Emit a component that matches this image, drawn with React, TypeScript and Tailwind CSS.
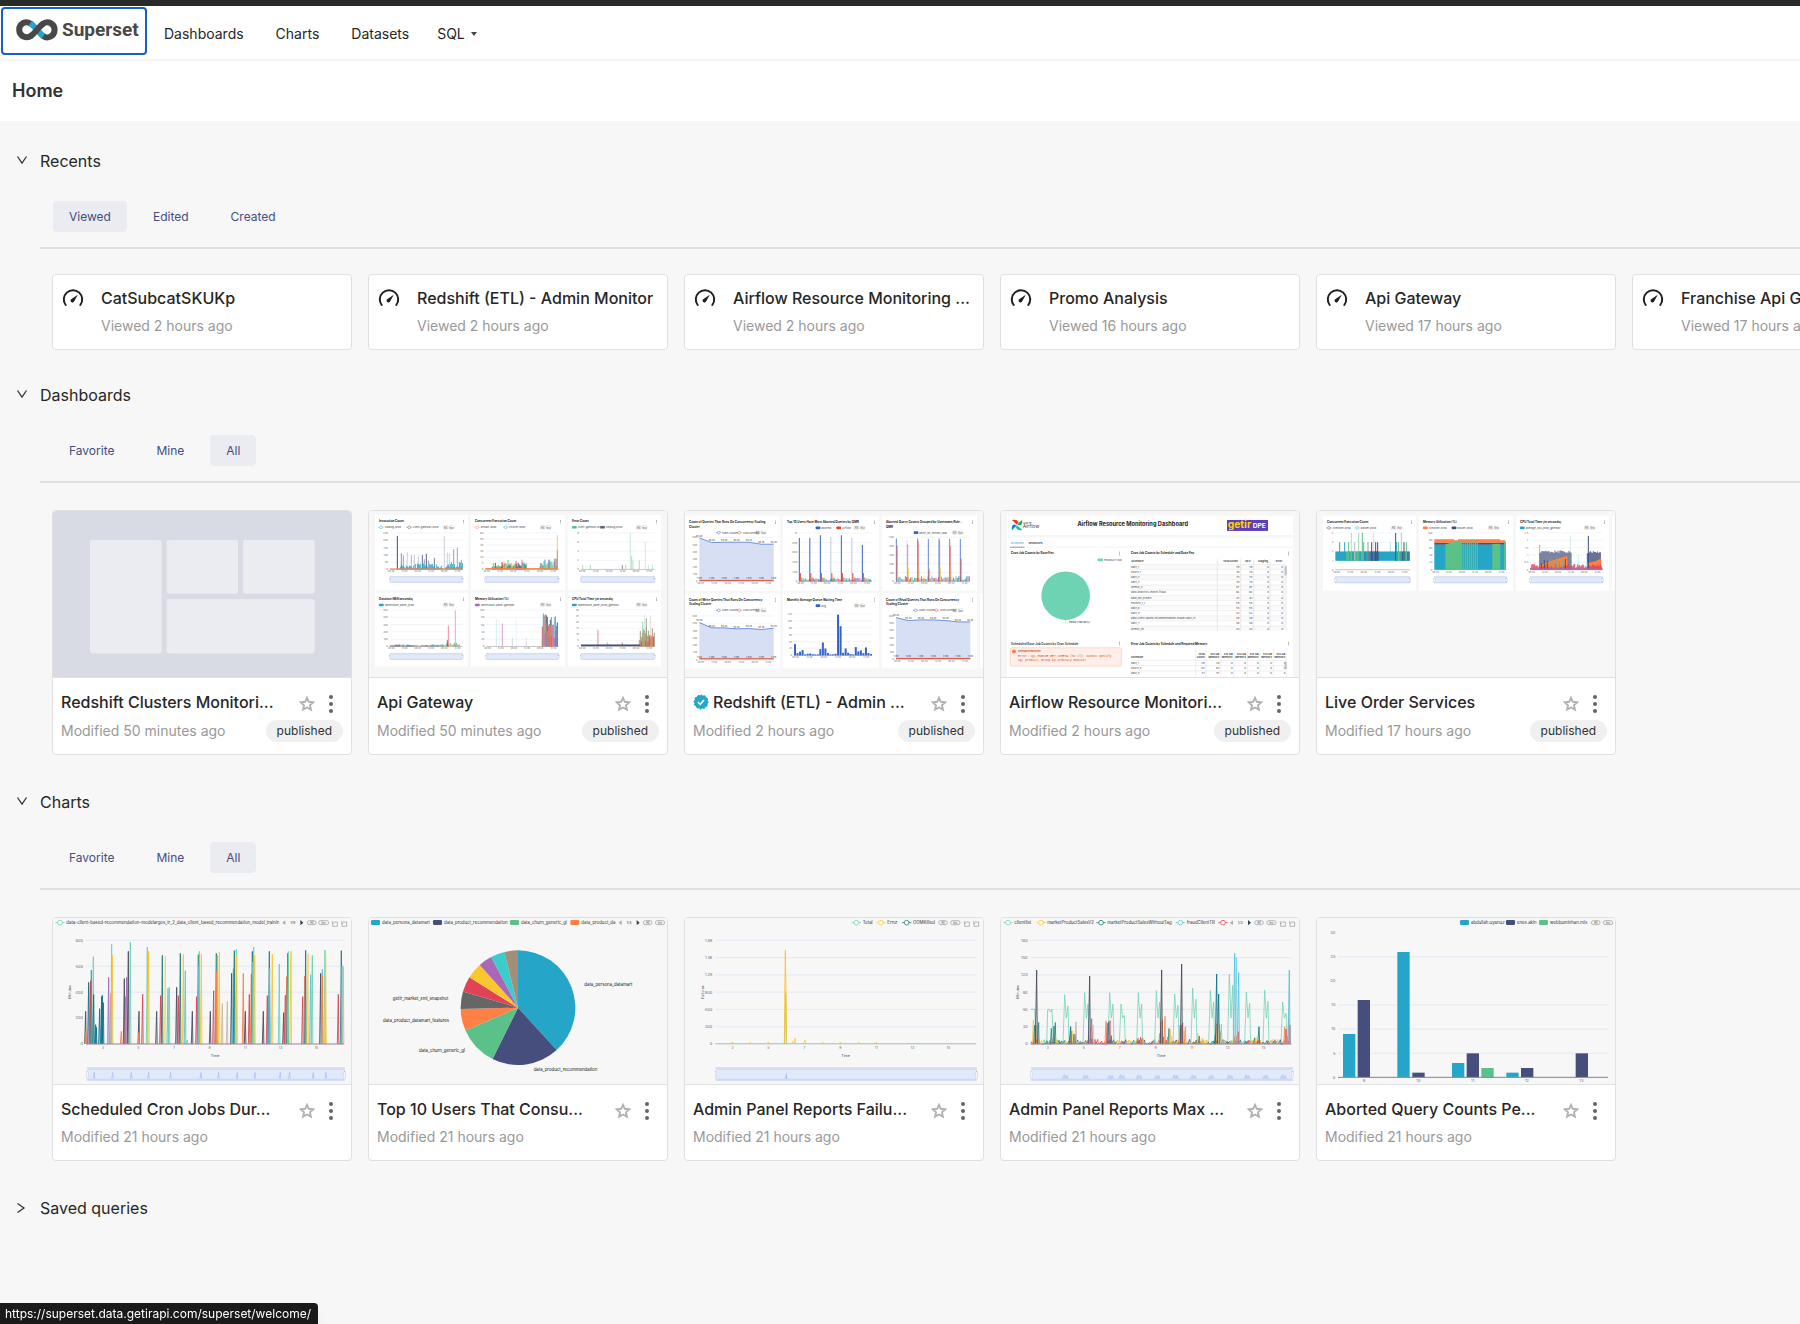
/**
 * App.tsx
 *
 * Superset welcome page: recents, dashboards, charts and saved queries.
 */

import { useState, type ReactNode } from 'react';

const TEAL = '#25a6c8';
const NAVY = '#454e7c';
const GREEN = '#5ac189';
const ORANGE = '#ff7f44';
const GRAY = '#666666';
const RED = '#e04355';
const YELLOW = '#fbc72f';
const PURPLE = '#a868b7';
const AQUA = '#3ccccb';
const BROWN = '#a38f79';
const MINT = '#6dd3b3';
const SLATE = '#484c5e';
const PINE = '#1f7d7d';
const SKY = '#5ac4da';
const BLUE = '#3462cb';

type Bar = [x: number, top: number, color: string, opacity?: number];

// Small seeded generator so the thumbnails look the same on every render
function random(seed: number) {
  let s = seed;
  return () => {
    s = (s * 16807) % 2147483647;
    return s / 2147483647;
  };
}

function noise(seed: number, from: number, to: number, step: number, base: number, min: number, max: number, colors: string[]): Bar[] {
  const next = random(seed);
  const bars: Bar[] = [];
  for (let x = from; x < to; x += step) {
    bars.push([x, base - min - next() * (max - min), colors[Math.floor(next() * colors.length)], 0.9]);
  }
  return bars;
}

/* ---------- thumbnail primitives ---------- */

interface LabelProps {
  x: number;
  y: number;
  size?: number;
  bold?: boolean;
  fill?: string;
  anchor?: 'start' | 'middle' | 'end';
  children: ReactNode;
}

function Label({ x, y, size = 9, bold = false, fill = '#444444', anchor = 'start', children }: LabelProps) {
  return (
    <text x={x} y={y} fontSize={size} fontWeight={bold ? 700 : 400} fill={fill} textAnchor={anchor}>
      {children}
    </text>
  );
}

function Bars({ data, base, width = 3 }: { data: Bar[]; base: number; width?: number }) {
  return (
    <g>
      {data.map(([x, top, color, opacity = 1], i) => (
        <rect key={i} x={x - width / 2} y={top} width={width} height={base - top} fill={color} opacity={opacity} />
      ))}
    </g>
  );
}

function Spikes({ data, base, spread = 4, stroke = 2.5 }: { data: Bar[]; base: number; spread?: number; stroke?: number }) {
  return (
    <g fill="none" strokeWidth={stroke}>
      {data.map(([x, top, color, opacity = 0.9], i) => (
        <path key={i} d={`M${x - spread} ${base}L${x} ${top}L${x + spread / 2} ${base}`} stroke={color} opacity={opacity} strokeLinejoin="bevel" />
      ))}
    </g>
  );
}

function Brush({ x, y, width, height = 20 }: { x: number; y: number; width: number; height?: number }) {
  return (
    <g>
      <rect x={x} y={y} width={width} height={height} fill="#e2e9fa" stroke="#d0d9ee" strokeWidth={1} />
      <rect x={x} y={y} width={width} height={height * 0.2} fill="#d6ddec" />
      <rect x={x} y={y + height * 0.86} width={width} height={height * 0.14} fill="#cbd8f7" />
      <rect x={x - 2} y={y + height * 0.3} width={4} height={height * 0.55} fill="#ffffff" stroke="#a9b8d6" strokeWidth={1} />
      <rect x={x + width - 2} y={y + height * 0.3} width={4} height={height * 0.55} fill="#ffffff" stroke="#a9b8d6" strokeWidth={1} />
    </g>
  );
}

function Marker({ x, y, color, size = 7 }: { x: number; y: number; color: string; size?: number }) {
  return (
    <g stroke={color} strokeWidth={size / 3}>
      <path d={`M${x - size * 2} ${y}H${x + size * 2}`} />
      <circle cx={x} cy={y} r={size} fill="#ffffff" />
    </g>
  );
}

function Pill({ x, y, w = 26, stroke = 1.5, children }: { x: number; y: number; w?: number; stroke?: number; children: ReactNode }) {
  return (
    <g>
      <rect x={x} y={y - 6} width={w} height={12} rx={6} fill="none" stroke="#777777" strokeWidth={stroke} />
      <Label x={x + w / 2} y={y + 4} anchor="middle">{children}</Label>
    </g>
  );
}

function Pager({ x, y, label }: { x: number; y: number; label: string }) {
  return (
    <g>
      <path d={`M${x + 9} ${y - 7}V${y + 7}L${x} ${y}Z`} fill="#aaaaaa" />
      <Label x={x + 31} y={y + 4} size={11} anchor="middle">{label}</Label>
      <path d={`M${x + 54} ${y - 8}V${y + 8}L${x + 63} ${y}Z`} fill="#2f4554" />
    </g>
  );
}

function Tools({ x, y }: { x: number; y: number }) {
  return (
    <path
      d={`M${x + 4} ${y - 4}h11v13h-14v-9M${x} ${y - 7}v7h5M${x + 32} ${y - 4}h11v13h-14v-9M${x + 28} ${y - 7}v7h5`}
      fill="none"
      stroke="#777777"
      strokeWidth={1.5}
    />
  );
}

interface PanelProps {
  x: number;
  y: number;
  w: number;
  h?: number;
  title: string[];
  legend: [string, string][];
  ticks: string[];
  top: number;
  base: number;
  from: number;
  to: number;
  brush?: boolean;
  markers?: boolean;
  children: ReactNode;
}

// One chart tile inside a dashboard thumbnail
function Panel({ x, y, w, h = 226, title, legend, ticks, top, base, from, to, brush = true, markers = false, children }: PanelProps) {
  const legendY = y + (title.length > 1 ? 51 : 37);
  const step = (base - top) / (ticks.length - 1);
  return (
    <g>
      <rect x={x} y={y} width={w} height={h} fill="#ffffff" />
      {title.map((line, i) => (
        <Label key={line} x={x + 12} y={y + 22 + i * 14} size={9} bold fill="#222222">{line}</Label>
      ))}
      <g fill="#555555">
        <rect x={x + w - 15} y={y + 15} width={2} height={2} />
        <rect x={x + w - 15} y={y + 19} width={2} height={2} />
        <rect x={x + w - 15} y={y + 23} width={2} height={2} />
      </g>
      {legend.map(([label, color], i) => {
        const lx = brush ? x + 12 + (i * (w - 110)) / legend.length : x + w - 190 + i * 62;
        return (
          <g key={label}>
            {markers ? <Marker x={lx + 6} y={legendY} color={color} size={4} /> : <rect x={lx} y={legendY - 4} width={14} height={8} rx={2} fill={color} />}
            <Label x={lx + 17} y={legendY + 3} size={8}>{label}</Label>
          </g>
        );
      })}
      <Pill x={x + w - 75} y={legendY} w={15} stroke={0.5}>All</Pill>
      <Pill x={x + w - 57} y={legendY} w={15} stroke={0.5}>Inv</Pill>
      {ticks.map((tick, i) => (
        <g key={i}>
          <path d={`M${from} ${base - i * step}H${to}`} stroke={i ? '#e6eaf4' : '#888888'} strokeWidth={1.5} />
          <Label x={from - 6} y={base - i * step + 3} size={8} anchor="end" fill="#777777">{tick}</Label>
        </g>
      ))}
      {children}
      {Array.from({ length: 6 }).map((_, i) => (
        <Label key={i} x={from + ((i + 0.1) * (to - from)) / 5.5} y={base + 9} size={7} anchor="middle" fill="#777777">
          {i % 2 ? '12:00' : '08:00'}
        </Label>
      ))}
      {brush && <Brush x={from} y={base + 20} width={to - from} />}
    </g>
  );
}

interface ThumbnailProps {
  viewBox: string;
  label: string;
  children: ReactNode;
}

function Thumbnail({ viewBox, label, children }: ThumbnailProps) {
  return (
    <svg viewBox={viewBox} preserveAspectRatio="none" role="img" aria-label={label} className="block h-full w-full font-['Inter',sans-serif]">
      {children}
    </svg>
  );
}

/* ---------- dashboard thumbnails ---------- */

function PlaceholderThumb() {
  return (
    <Thumbnail viewBox="39 33 894 500" label="Dashboard placeholder">
      <rect x={39} y={33} width={894} height={500} fill="#d8dbe3" />
      <g fill="#ebecf1">
        <rect x={150} y={120} width={215} height={342} rx={7} />
        <rect x={380} y={120} width={214} height={162} rx={7} />
        <rect x={609} y={120} width={215} height={162} rx={7} />
        <rect x={380} y={299} width={444} height={163} rx={7} />
      </g>
    </Thumbnail>
  );
}

const tallInvocations: Bar[] = [
  [112, 108, NAVY], [124, 160, NAVY, 0.6], [130, 166, NAVY, 0.5], [142, 156, NAVY, 0.25], [154, 166, NAVY, 0.4], [163, 165, NAVY, 0.3],
  [175, 168, NAVY, 0.3], [187, 165, NAVY, 0.8], [193, 178, NAVY, 0.5], [199, 162, NAVY, 0.9], [205, 182, NAVY, 0.5], [223, 174, '#444444', 0.7],
  [253, 108, NAVY, 0.25], [262, 158, NAVY, 0.25], [268, 162, NAVY, 0.25], [281, 148, NAVY, 0.5], [292, 144, NAVY, 0.5], [304, 180, NAVY, 0.5],
];

function ApiGatewayThumb() {
  return (
    <Thumbnail viewBox="27 33 894 500" label="Api Gateway preview">
      <rect x={27} y={33} width={894} height={500} fill="#f7f7f7" />
      <Panel x={45} y={45} w={279} title={['Invocation Count']} legend={[['catalog-prod', TEAL], ['client-gateway-prod', NAVY]]} markers ticks={['0', '50', '100', '150', '200', '250']} top={99} base={209} from={90} to={308}>
        <Bars data={tallInvocations} base={209} />
        <Bars data={noise(11, 118, 250, 3, 209, 3, 18, [TEAL])} base={209} />
        <Bars data={noise(12, 256, 308, 3, 209, 6, 22, [TEAL])} base={209} />
        <rect x={90} y={206} width={218} height={3} fill={ORANGE} />
      </Panel>
      <Panel x={333} y={45} w={282} title={['Concurrent Execution Count']} legend={[['artisan-prod', ORANGE], ['courier-prod', TEAL]]} markers ticks={['0', '5', '20', '30', '40', '50', '60']} top={99} base={209} from={376} to={596}>
        <Bars data={noise(21, 397, 500, 3, 209, 8, 20, [NAVY, NAVY, GREEN, PINE])} base={209} />
        <Bars data={noise(22, 420, 500, 6, 209, 10, 30, [RED, PURPLE, GREEN, YELLOW])} base={209} />
        <Bars data={noise(23, 540, 594, 3, 209, 10, 34, [GREEN, GREEN, NAVY, TEAL])} base={209} />
        <rect x={376} y={205} width={218} height={4} fill={ORANGE} />
        <Bars data={[[592, 105, YELLOW, 0.8], [592, 150, ORANGE, 0.9]]} base={209} />
      </Panel>
      <Panel x={624} y={45} w={279} title={['Error Count']} legend={[['client-gateway-prod', GREEN], ['catalog-prod', GRAY]]} ticks={['0', '2', '4', '6', '8']} top={99} base={209} from={663} to={884}>
        <Bars
          base={209}
          data={[[668, 195, GREEN, 0.5], [691, 195, GREEN, 0.5], [787, 195, GRAY, 0.7], [797, 195, GREEN, 0.5], [811, 100, GREEN, 0.3], [815, 168, GREEN, 0.5], [819, 182, GREEN, 0.4], [838, 182, GREEN, 0.5], [856, 126, GREEN, 0.25], [865, 195, GREEN, 0.3], [877, 195, GREEN, 0.4]]}
        />
      </Panel>
      <Panel x={45} y={279} w={279} h={222} title={['Duration (Milliseconds)']} legend={[['warehouse_panel_prod', TEAL]]} ticks={['0', '10k', '20k', '30k', '40k', '50k']} top={331} base={441} from={90} to={308}>
        <Bars data={noise(31, 90, 250, 3, 441, 2, 6, [NAVY, NAVY, TEAL, ORANGE])} base={441} />
        <Bars data={noise(32, 250, 300, 3, 441, 3, 12, [YELLOW, ORANGE, GREEN])} base={441} />
        <Bars data={[[265, 378, RED, 0.6], [262, 422, '#8b3a4a', 0.8], [286, 333, RED, 0.45]]} base={441} />
      </Panel>
      <Panel x={333} y={279} w={282} h={222} title={['Memory Utilization (%)']} legend={[['warehouse-panel-gateway', PURPLE]]} ticks={['0', '20', '40', '60', '80', '100']} top={331} base={441} from={379} to={596}>
        <Bars data={[[409, 358, TEAL, 0.2], [418, 360, TEAL, 0.1], [427, 372, PURPLE, 0.6], [457, 416, GRAY, 0.25], [469, 360, TEAL, 0.1], [499, 416, PURPLE, 0.25]]} base={441} />
        <Bars data={noise(41, 547, 594, 3, 441, 60, 100, [PURPLE, NAVY, RED, '#8fb7b0', TEAL, BROWN])} base={441} />
        <Bars data={noise(42, 547, 594, 4, 441, 20, 70, [PURPLE, ORANGE, BROWN, PURPLE])} base={441} />
      </Panel>
      <Panel x={624} y={279} w={279} h={222} title={['CPU Total Time (in seconds)']} legend={[['Warehouse_panel_prod_gateway', TEAL]]} ticks={['0', '5', '10', '15', '20', '25', '30']} top={331} base={441} from={663} to={884}>
        <Bars data={[[713, 390, GREEN, 0.6], [716, 392, RED, 0.25], [742, 428, GREEN, 0.6], [787, 428, BROWN, 0.8]]} base={441} />
        <Bars data={noise(51, 838, 884, 3, 441, 20, 70, [GREEN, BROWN, ORANGE, BROWN])} base={441} />
        <Bars data={noise(52, 840, 884, 4, 441, 8, 36, [ORANGE, RED])} base={441} />
        <Bars data={[[848, 366, GREEN, 0.6], [854, 345, GREEN, 0.3], [859, 356, BROWN, 0.8], [871, 350, BROWN, 0.3]]} base={441} />
        <rect x={663} y={435} width={176} height={5} fill={NAVY} />
      </Panel>
    </Thumbnail>
  );
}

function AreaPanel({ x, y, w, title, ys, base, top, from, to }: { x: number; y: number; w: number; title: string[]; ys: number[]; base: number; top: number; from: number; to: number }) {
  const step = (to - from) / (ys.length - 1);
  const line = ys.map((v, i) => `${from + i * step} ${v}`).join('L');
  return (
    <Panel x={x} y={y} w={w} title={title} legend={[['Main Cluster', BLUE], ['Concurrency', RED]]} markers ticks={['0', '10k', '20k', '30k', '40k', '50k', '60k']} top={top} base={base} from={from} to={to} brush={false}>
      <path d={`M${line}L${to} ${base}L${from} ${base}Z`} fill="#d6dff4" />
      <path d={`M${line}`} fill="none" stroke={BLUE} strokeWidth={2} />
      <path d={`M${from} ${base - 3}H${to}`} stroke="#d9503f" strokeWidth={3} />
      {ys.map((v, i) => (
        <g key={i}>
          <Label x={from + i * step} y={v - 4} size={7} anchor="middle" fill="#222222">53.2k</Label>
          <Label x={from + i * step} y={base - 6} size={7} anchor="middle" fill="#222222">1.31k</Label>
        </g>
      ))}
    </Panel>
  );
}

function RedshiftThumb() {
  const weeks = [0, 1, 2, 3, 4, 5, 6];
  const hourly = [434, 461, 457, 452, 465, 463, 462, 464, 465, 465, 449, 429, 447, 461, 465, 465, 463, 345, 380, 460, 447, 460, 464, 465, 443, 456, 453, 461, 444, 461, 464];
  return (
    <Thumbnail viewBox="27 33 894 500" label="Redshift (ETL) - Admin Monitor preview">
      <rect x={27} y={33} width={894} height={500} fill="#f7f7f7" />
      <AreaPanel x={27} y={47} w={285} title={['Count of Queries That Runs On Concurrency Scaling', 'Cluster']} ys={[114, 128, 127, 127, 127, 133, 133]} top={112} base={245} from={70} to={293} />
      <Panel x={321} y={47} w={288} title={['Top 10 Users Have Most Aborted Queries by QMR']} legend={[['aborted', BLUE], ['Airflow', '#e0452f']]} ticks={['0', '200', '400', '600', '800', '1k']} top={99} base={245} from={370} to={588} brush={false}>
        <Bars data={noise(61, 376, 588, 4, 245, 2, 10, [GREEN, PURPLE, TEAL, RED, BLUE])} base={245} />
        {weeks.map(i => (
          <Bars
            key={i}
            base={245}
            data={[[370 + i * 31.5, [114, 114, 106, 111, 106, 114, 135][i], BLUE, i % 2 && i !== 1 ? 0.35 : 1], [373 + i * 31.5, 220, '#e0452f'], [377 + i * 31.5, 233, ORANGE], [381 + i * 31.5, 235, GREEN]]}
          />
        ))}
      </Panel>
      <Panel x={618} y={47} w={285} title={['Aborted Query Counts Grouped by Username/Rule -', 'QMR']} legend={[['abort_on_nested_loop', BLUE]]} ticks={['0', '100', '200', '300', '400', '500']} top={112} base={245} from={660} to={882} brush={false}>
        <Bars data={noise(71, 664, 882, 4, 245, 3, 16, [GREEN, PURPLE, TEAL, RED, BROWN])} base={245} />
        {weeks.map(i => (
          <Bars
            key={i}
            base={245}
            data={[[661 + i * 32, [116, 121, 116, 117, 116, 117, 117][i], BLUE, i === 1 ? 0.2 : 0.75], [663 + i * 32, [137, 134, 124, 210, 122, 138, 176][i], '#d9503f', i % 3 ? 0.6 : 0.9], [665 + i * 32, 205, YELLOW, 0.7]]}
          />
        ))}
      </Panel>
      <AreaPanel x={27} y={281} w={285} title={['Count of Write Queries That Runs On Concurrency', 'Scaling Cluster']} ys={[369, 385, 385, 388, 387, 390, 386]} top={349} base={481} from={70} to={293} />
      <Panel x={321} y={281} w={288} title={['Monthly Average Queue Waiting Time']} legend={[['avg', BLUE]]} ticks={['0', '2k', '4k', '6k', '8k', '10k', '12k']} top={343} base={468} from={354} to={588} brush={false}>
        <Bars data={hourly.map((top, i): Bar => [357 + i * 7.6, top, BLUE])} base={468} width={6} />
      </Panel>
      <AreaPanel x={618} y={281} w={285} title={['Count of Read Queries That Runs On Concurrency', 'Scaling Cluster']} ys={[354, 363, 361, 361, 363, 367, 367]} top={349} base={480} from={660} to={883} />
      <rect x={912} y={281} width={9} height={226} fill="#ffffff" />
    </Thumbnail>
  );
}

const schedules = ['daily_1', 'hourly_1', 'daily_3', 'daily_2', 'weekly_4', 'data-analytics-month-fraud', 'data_dw_project', 'monthly_1_1', 'daily_9', 'daily_11', 'data-client-based-recommendation-model-daily_13', 'daily_7', 'weekly_ml'];

function AirflowThumb() {
  return (
    <Thumbnail viewBox="27 33 894 500" label="Airflow Resource Monitoring preview">
      <rect x={27} y={33} width={894} height={500} fill="#f7f7f7" />
      <rect x={45} y={47} width={858} height={58} fill="#ffffff" />
      <rect x={45} y={113} width={858} height={420} fill="#ffffff" />
      <g>
        <path d="M74 74L60 60Q74 58 80 66Z" fill="#e43921" />
        <path d="M75 74L90 60Q93 72 84 76Z" fill="#00ad46" />
        <path d="M75 76L91 90Q78 94 71 83Z" fill="#11c3a0" />
        <path d="M74 76L60 91Q57 78 66 74Z" fill="#017cee" />
        <path d="M74 74L88 62L80 72Z" fill="#ff7557" />
      </g>
      <Label x={93} y={71} size={7}>Apache</Label>
      <Label x={92} y={84} size={15}>Airflow</Label>
      <Label x={422} y={79} size={17} bold anchor="middle" fill="#222222">Airflow Resource Monitoring Dashboard</Label>
      <rect x={705} y={60} width={123} height={33} fill="#5d3ebc" />
      <Label x={707} y={85} size={31} bold fill="#ffd300">getir</Label>
      <Label x={782} y={84} size={20} bold fill="#ffffff">DPE</Label>
      <Label x={56} y={131} size={8} fill={TEAL}>Schedules</Label>
      <Label x={110} y={131} size={8} bold>Resources</Label>
      <path d="M54 142H98" stroke="#8b8ec0" strokeWidth={3} />
      <path d="M98 142H903" stroke="#eeeeee" strokeWidth={2} />

      <Label x={57} y={164} size={9} bold fill="#222222">Cron Job Counts by Base Env</Label>
      <rect x={317} y={176} width={16} height={8} rx={2} fill={MINT} />
      <Label x={336} y={183} size={8}>PRODUCTION</Label>
      <circle cx={221} cy={288} r={73} fill={MINT} />
      <path d="M221 361V369H226" fill="none" stroke={MINT} strokeWidth={1.5} />
      <Label x={231} y={371} size={8} fill="#222222">PROD (100.00%)</Label>

      <Label x={417} y={164} size={9} bold fill="#222222">Cron Job Counts by Schedule and Base Env</Label>
      {['Total Count', 'DEV', 'Staging', 'Error'].map((name, i) => (
        <Label key={name} x={[738, 776, 828, 871][i]} y={187} size={8} bold anchor="end">{name}</Label>
      ))}
      <Label x={418} y={187} size={8} bold>Schedule</Label>
      {schedules.map((name, i) => (
        <g key={name}>
          {i % 2 === 0 && <rect x={414} y={194 + i * 15.5} width={462} height={15} fill="#fafafa" />}
          <path d={`M414 ${194 + i * 15.5}H876`} stroke="#e4e4e4" strokeWidth={1.5} />
          <Label x={417} y={204 + i * 15.5} size={8}>{name}</Label>
          {[742, 781, 831, 873].map((cx, c) => (
            <Label key={cx} x={cx} y={204 + i * 15.5} size={8} anchor="end">{c < 2 ? 79 - i * 3 : 0}</Label>
          ))}
        </g>
      ))}
      <path d="M676 178V393M746 178V393M785 178V393M834 178V393M876 194V393" stroke="#e0e0e0" strokeWidth={2} />
      <rect x={877} y={194} width={8} height={199} fill="#f3f3f3" />
      <rect x={878} y={199} width={6} height={28} rx={3} fill="#bdbdbd" />

      <Label x={57} y={436} size={9} bold fill="#444444">Scheduled Base Job Counts by Cron Schedule</Label>
      <rect x={55} y={445} width={333} height={55} rx={4} fill="#ffefe8" stroke="#ffc7ae" strokeWidth={2} />
      <circle cx={66} cy={456} r={6} fill={ORANGE} />
      <Label x={78} y={459} size={8} bold fill="#c4532b">Unexpected Error</Label>
      <g className="font-['Liberation_Mono',monospace]">
        <Label x={78} y={473} size={9} fill="#c4532b">Error: SQL_ENGINE_GET_SCHEMA (no cl): Cannot specify</Label>
        <Label x={78} y={486} size={9} fill="#c4532b">SQL product: Group by ordinary monitor</Label>
      </g>

      <Label x={417} y={436} size={9} bold fill="#222222">Error Job Counts by Schedule and Required Memory</Label>
      <Label x={417} y={476} size={8} bold>Schedule</Label>
      {[638, 682, 722, 762, 800, 840, 880].map((cx, i) => (
        <g key={cx}>
          <Label x={cx} y={466} size={8} bold anchor="end">{i ? '512 GB' : 'Total'}</Label>
          <Label x={cx} y={476} size={8} bold anchor="end">{i ? 'Memory' : 'Count'}</Label>
          <path d={`M${cx + 4} 446V533`} stroke="#e0e0e0" strokeWidth={1.5} />
          {['29', '83', '57'].map((v, r) => (
            <Label key={v} x={cx} y={493 + r * 16} size={8} anchor="end">{i < 2 ? v : '0'}</Label>
          ))}
        </g>
      ))}
      {['daily_1', 'hourly_5', 'daily_5'].map((name, i) => (
        <g key={name}>
          <path d={`M414 ${483 + i * 16}H884`} stroke="#e0e0e0" strokeWidth={1.5} />
          <Label x={417} y={493 + i * 16} size={8}>{name}</Label>
        </g>
      ))}
      <path d="M611 446V533" stroke="#e0e0e0" strokeWidth={1.5} />
      <rect x={878} y={486} width={6} height={24} rx={3} fill="#bdbdbd" />
      <g fill="#444444">
        <path d="M382 156h2v2h-2zM382 160h2v2h-2zM382 164h2v2h-2zM889 156h2v2h-2zM889 160h2v2h-2zM889 164h2v2h-2z" />
        <path d="M382 427h2v2h-2zM382 431h2v2h-2zM382 435h2v2h-2zM889 427h2v2h-2zM889 431h2v2h-2zM889 435h2v2h-2z" />
      </g>
    </Thumbnail>
  );
}

function LiveOrderThumb() {
  return (
    <Thumbnail viewBox="27 33 894 500" label="Live Order Services preview">
      <rect x={27} y={33} width={894} height={500} fill="#f7f7f7" />
      <Panel x={45} y={47} w={279} title={['Concurrent Execution Count']} legend={[['liveorder-prod', NAVY], ['basket-prod', TEAL]]} markers ticks={['0', '1', '2', '3', '4']} top={99} base={210} from={82} to={306}>
        <rect x={82} y={155} width={224} height={28} fill={TEAL} />
        <Bars data={noise(81, 116, 166, 3, 183, 28, 28, [GREEN, GREEN, GREEN, TEAL])} base={183} />
        <Bars data={noise(82, 168, 212, 3, 183, 28, 28, [NAVY, NAVY, TEAL])} base={183} />
        <Bars data={noise(83, 268, 304, 4, 183, 28, 28, [GREEN, NAVY, TEAL])} base={183} />
        <Bars
          base={183}
          data={[[95, 127, TEAL], [110, 127, TEAL], [122, 127, GREEN], [130, 99, GREEN, 0.5], [140, 127, '#bbbbbb'], [152, 99, GREEN, 0.6], [163, 99, GREEN], [167, 127, GREEN], [180, 127, '#999999'], [191, 127, NAVY], [197, 99, GREEN, 0.35], [203, 127, NAVY], [209, 127, NAVY], [247, 127, TEAL, 0.3], [263, 99, NAVY], [266, 127, TEAL], [272, 127, GREEN], [280, 99, GREEN, 0.6], [288, 127, NAVY], [295, 127, GREEN]]}
        />
      </Panel>
      <Panel x={333} y={47} w={282} title={['Memory Utilization (%)']} legend={[['liveorder-prod', ORANGE], ['basket-prod', NAVY]]} ticks={['0', '20', '40', '60', '80', '100']} top={99} base={210} from={379} to={596}>
        <rect x={379} y={133} width={214} height={77} fill={TEAL} />
        <rect x={379} y={128} width={214} height={6} fill={NAVY} />
        <path d="M379 118H438V121H450V118H576V121H592V129H379Z" fill={ORANGE} />
        <path d="M412 133L450 123L462 122V210H412Z" fill={GREEN} />
        <Bars data={noise(91, 466, 510, 6, 210, 80, 92, [GREEN])} base={210} width={4} />
        <rect x={553} y={132} width={24} height={78} fill={GREEN} />
        <rect x={588} y={126} width={6} height={84} fill={GREEN} />
      </Panel>
      <Panel x={624} y={47} w={279} title={['CPU Total Time (in seconds)']} legend={[['average_cpu_prod_gateway', TEAL]]} ticks={['0', '0.5', '1', '1.5', '2', '2.5']} top={99} base={210} from={667} to={884}>
        <Bars data={noise(101, 696, 790, 3, 210, 50, 58, [NAVY])} base={210} />
        <Bars data={noise(102, 838, 880, 3, 210, 50, 58, [NAVY])} base={210} />
        <path d="M696 196L720 186L778 168L779 210H696Z" fill={ORANGE} />
        <path d="M838 190L862 184L880 176V210H838Z" fill={ORANGE} />
        <Bars data={noise(103, 668, 884, 3, 210, 6, 18, [RED])} base={210} />
        <Bars data={noise(104, 700, 778, 9, 210, 20, 36, [GREEN, BROWN, NAVY])} base={210} />
        <Bars data={[[695, 135, GRAY, 0.5], [787, 108, GREEN, 0.25], [841, 108, NAVY], [811, 165, TEAL, 0.2], [784, 196, PURPLE]]} base={210} />
        <rect x={667} y={206} width={217} height={4} fill={PURPLE} />
      </Panel>
      <rect x={912} y={47} width={9} height={226} fill="#ffffff" />
    </Thumbnail>
  );
}

/* ---------- chart thumbnails ---------- */

interface AxesProps {
  from: number;
  to: number;
  ticks: string[];
  days: [number, string][];
  unit: string;
  unitX: number;
}

function Axes({ from, to, ticks, days, unit, unitX }: AxesProps) {
  const step = 311 / (ticks.length - 1);
  return (
    <g>
      {ticks.map((tick, i) => (
        <g key={tick}>
          <path d={`M${from} ${432 - i * step}H${to}`} stroke="#e0e6f1" strokeWidth={2.5} />
          <Label x={from - 9} y={436 - i * step} size={12} anchor="end" fill="#6e7079">{tick}</Label>
        </g>
      ))}
      {days.map(([x, day]) => (
        <Label key={x} x={x} y={447} size={11} anchor="middle" fill="#6e7079">{day}</Label>
      ))}
      <text transform={`translate(${unitX} 276) rotate(-90)`} textAnchor="middle" fontSize={11} fill="#555555">{unit}</text>
      <Label x={(from + to) / 2} y={471} size={11} anchor="middle">Time</Label>
    </g>
  );
}

const cronSpikes: Bar[] = [
  [137, 334, SLATE], [138, 392, ORANGE], [146, 247, '#12728a'], [151, 258, PURPLE], [154, 210, TEAL], [152, 242, RED], [160, 170, MINT], [161, 284, '#12728a'],
  [167, 374, '#12728a'], [169, 382, '#12728a'], [179, 326, '#12728a'], [185, 290, '#12728a'], [187, 286, '#12728a'], [190, 308, '#12728a'], [206, 232, PURPLE], [215, 133, MINT], [217, 166, YELLOW], [212, 280, RED, 0.3],
  [244, 394, ORANGE], [253, 236, SLATE], [257, 290, RED, 0.5], [260, 232, PURPLE], [265, 154, SLATE], [271, 127, MINT], [297, 334, SLATE], [297, 398, ORANGE], [308, 283, RED], [322, 141, MINT], [326, 154, YELLOW],
  [350, 334, SLATE], [362, 287, RED], [367, 166, PINE], [376, 168, YELLOW, 0.6], [384, 265, SKY], [388, 262, MINT], [410, 262, SLATE], [415, 287, RED], [421, 160, PINE], [430, 163, YELLOW], [436, 212, SKY], [442, 420, MINT],
  [457, 334, SLATE], [470, 290, RED], [475, 164, PINE], [478, 154, MINT], [484, 162, YELLOW], [476, 200, SKY], [511, 334, SLATE], [521, 272, RED], [529, 160, PINE], [532, 166, MINT], [538, 156, YELLOW], [529, 215, ORANGE],
  [547, 310, '#c9b8a8'], [562, 304, '#c9b8a8'], [575, 220, SLATE], [580, 206, SKY], [583, 152, PINE], [589, 148, MINT], [590, 166, YELLOW], [610, 220, ORANGE], [616, 334, SLATE], [628, 283, RED], [634, 222, ORANGE], [637, 154, PINE], [638, 186, SKY], [641, 142, MINT], [644, 166, YELLOW],
  [670, 334, SLATE], [682, 287, RED], [688, 154, PINE], [689, 206, SKY], [697, 162, YELLOW], [718, 192, MINT], [731, 338, SLATE], [736, 286, RED], [740, 230, ORANGE], [743, 160, PINE], [745, 154, MINT], [753, 154, YELLOW],
  [788, 290, RED], [794, 228, ORANGE], [797, 151, PINE], [804, 160, YELLOW, 0.7], [812, 224, SKY], [817, 166, MINT], [842, 220, SLATE], [847, 208, SKY], [847, 226, ORANGE], [855, 150, MINT], [857, 168, YELLOW], [895, 283, RED], [904, 152, PINE], [906, 196, SKY], [910, 200, '#c9b8a8'],
];

function CronThumb() {
  return (
    <Thumbnail viewBox="39 54 894 498" label="Scheduled Cron Jobs Duration preview">
      <Marker x={60} y={68} color={MINT} />
      <Label x={79} y={72} size={13} fill="#333333">data-client-based-recommendation-model</Label>
      <Label x={341} y={72} size={13} fill="#333333">argos_tr_2_data_client_based_recommendation_model_trainin</Label>
      <rect x={718} y={58} width={215} height={20} fill="#f7f7f7" />
      <Pager x={727} y={68} label="1/9" />
      <Pill x={802} y={68}>All</Pill>
      <Pill x={836} y={68} w={30}>Inv</Pill>
      <Tools x={877} y={70} />
      <Axes from={138} to={912} ticks={['0', '200', '400', '600', '800']} days={[[189, '3'], [295, '5'], [402, '7'], [509, '9'], [616, '11'], [722, '13'], [829, '15']]} unit="Minutes" unitX={93} />
      <Spikes data={cronSpikes} base={432} spread={3} stroke={3} />
      <path d="M138 432H912" stroke="#a08a94" strokeWidth={3} />
      <Brush x={142} y={502} width={772} height={40} />
      <Spikes base={536} data={[163, 218, 274, 326, 392, 483, 536, 592, 645, 721, 749, 820, 858].map((x): Bar => [x, 517, '#a9c0f5'])} spread={3} />
    </Thumbnail>
  );
}

const slices: [number, string][] = [[137.6, TEAL], [206.4, NAVY], [246.4, GREEN], [268.7, ORANGE], [286.3, GRAY], [302.1, RED], [318.1, YELLOW], [332, PURPLE], [346.3, AQUA], [360, BROWN]];

function PieThumb() {
  const point = (deg: number) => {
    const a = (deg * Math.PI) / 180;
    return `${474 + 172 * Math.sin(a)} ${323 - 172 * Math.cos(a)}`;
  };
  return (
    <Thumbnail viewBox="27 54 894 498" label="Top 10 Users That Consume preview">
      {([[33, TEAL, 'data_persona_datamart'], [219, NAVY, 'data_product_recommendation'], [450, GREEN, 'data_churn_generic_gl'], [631, ORANGE, 'data_product_da']] as [number, string, string][]).map(([x, color, name]) => (
        <g key={name}>
          <rect x={x} y={60} width={27} height={15} rx={4} fill={color} />
          <Label x={x + 33} y={72} size={13} fill="#333333">{name}</Label>
        </g>
      ))}
      <Pager x={776} y={68} label="1/4" />
      <Pill x={850} y={68}>All</Pill>
      <Pill x={886} y={68} w={28}>Inv</Pill>
      {slices.map(([end, color], i) => (
        <path key={color} d={`M474 323L${point(i ? slices[i - 1][0] : 0)}A172 172 0 0 1 ${point(end)}Z`} fill={color} />
      ))}
      <Label x={673} y={257} size={13} fill="#111111">data_persona_datamart</Label>
      <Label x={521} y={514} size={13} fill="#111111">data_product_recommendation</Label>
      <Label x={315} y={455} size={13} anchor="end" fill="#111111">data_churn_generic_gl</Label>
      <Label x={267} y={367} size={13} anchor="end" fill="#111111">data_product_datamart_features</Label>
      <Label x={265} y={301} size={13} anchor="end" fill="#111111">getir_market_xml_snapshot</Label>
    </Thumbnail>
  );
}

const lineDays = (start: number, step: number): [number, string][] =>
  ['3', '5', '7', '9', '11', '13', '15'].map((day, i) => [start + i * step, day]);

function FailureThumb() {
  return (
    <Thumbnail viewBox="27 54 894 498" label="Admin Panel Reports Failure preview">
      {([[541, MINT, 'Total'], [615, YELLOW, 'Error'], [692, PINE, 'OOMKilled']] as [number, string, string][]).map(([x, color, name]) => (
        <g key={name}>
          <Marker x={x} y={68} color={color} />
          <Label x={x + 19} y={72} size={13} fill="#333333">{name}</Label>
        </g>
      ))}
      <Pill x={788} y={68}>All</Pill>
      <Pill x={824} y={68} w={28}>Inv</Pill>
      <Tools x={865} y={70} />
      <Axes from={118} to={900} ticks={['0', '300', '600', '900', '1.2k', '1.5k', '1.8k']} days={lineDays(169, 108)} unit="Failures" unitX={84} />
      <path d="M118 431H900" stroke="#b9d3a6" strokeWidth={4} />
      <path d="M325 431L328 150L332 431" fill="none" stroke={YELLOW} strokeWidth={3} strokeLinejoin="bevel" />
      <path d="M326 431L329 280L331 431" fill="none" stroke="#d3c568" strokeWidth={3} strokeLinejoin="bevel" />
      <Spikes base={431} data={[[357, 414, YELLOW], [350, 425, YELLOW], [387, 420, YELLOW], [169, 426, YELLOW], [223, 426, YELLOW], [277, 426, YELLOW], [440, 426, YELLOW], [494, 426, YELLOW], [548, 426, YELLOW], [601, 426, YELLOW]]} />
      <Brush x={120} y={502} width={782} height={40} />
      <path d="M327 536L331 516L334 536" fill="#a9c0f5" />
    </Thumbnail>
  );
}

// Mint series of the "Max" chart: x and height of each daily peak
const dailyPeaks = [[219, 284], [279, 278], [354, 278], [388, 312], [440, 278], [494, 272], [549, 282], [603, 264], [656, 272], [713, 222], [764, 276], [819, 270], [873, 306]];

const clusterTops = [[126, 90], [180, 80], [236, 55], [290, 66], [344, 84], [440, 24], [505, 84], [525, 50], [566, 66], [620, 50], [672, 66], [725, 40], [790, 20], [880, 80]];

function MaxThumb() {
  const low = noise(131, 125, 890, 4, 432, 0, 14, [MINT, RED, YELLOW, SLATE, PINE]);
  const clusters = clusterTops.flatMap(([x, max], i) =>
    noise(140 + i, x - 6, x + 17, 4, 432, 8, max, [ORANGE, YELLOW, RED, PINE, ORANGE]),
  );
  return (
    <Thumbnail viewBox="27 54 894 498" label="Admin Panel Reports Max Duration preview">
      {([[48, MINT, 'clientlist'], [147, YELLOW, 'marketProductSalesV2'], [327, PINE, 'marketProductSalesWithoutTag'], [565, SKY, 'fraudClientTR'], [693, RED, '']] as [number, string, string][]).map(([x, color, name]) => (
        <g key={x}>
          <Marker x={x} y={68} color={color} />
          <Label x={x + 19} y={72} size={13} fill="#333333">{name}</Label>
        </g>
      ))}
      <Pager x={714} y={68} label="1/3" />
      <Pill x={788} y={68}>All</Pill>
      <Pill x={824} y={68} w={28}>Inv</Pill>
      <Tools x={865} y={70} />
      <Axes from={116} to={898} ticks={['0', '30', '60', '90', '120', '150', '180']} days={lineDays(167, 108)} unit="Minutes" unitX={80} />
      <path d="M116 328H128L133 432M164 432L167 330L172 328L176 336L180 328L184 432" fill="none" stroke={MINT} strokeWidth={2.5} />
      {dailyPeaks.map(([x, y]) => (
        <path
          key={x}
          d={`M${x - 6} 432L${x - 1} ${y}L${x + 4} 354L${x + 9} ${y + 34}L${x + 12} 432`}
          fill="none"
          stroke={MINT}
          strokeWidth={2.5}
          opacity={0.9}
        />
      ))}
      <Spikes data={low} base={432} spread={5} />
      <Spikes data={clusters} base={432} spread={3} />
      <Spikes
        base={432}
        spread={4}
        stroke={3}
        data={[[134, 210, SLATE], [293, 228, SLATE], [509, 210, SLATE], [569, 192, SLATE], [674, 222, '#12728a'], [680, 282, '#12728a'], [236, 380, '#12728a'], [801, 380, PINE], [728, 160, SKY], [733, 172, SKY, 0.6], [740, 218, SKY], [892, 210, SKY], [688, 372, SKY, 0.6], [299, 356, PURPLE], [252, 366, '#c9b8a8']]}
      />
      <path d="M116 432H898" stroke="#a08a94" strokeWidth={3} />
      <Brush x={118} y={502} width={784} height={40} />
      {dailyPeaks.map(([x], i) => (
        <path key={x} d={`M${x - 10} 536L${x - 2} ${521 + (i % 3) * 2}L${x + 2} 528L${x + 7} 524L${x + 12} 536Z`} fill="#c0d0f7" />
      ))}
    </Thumbnail>
  );
}

function AbortedThumb() {
  const bars: [number, number, string][] = [[105, 402, TEAL], [149, 300, NAVY], [268, 156, TEAL], [313, 518, NAVY], [432, 489, TEAL], [476, 460, NAVY], [520, 504, GREEN], [595, 518, TEAL], [639, 504, NAVY], [803, 460, NAVY]];
  return (
    <Thumbnail viewBox="27 54 894 498" label="Aborted Query Counts preview">
      {([[456, TEAL, 'abdullah.uyanuz'], [594, NAVY, 'enes.akin'], [693, GREEN, 'webbuminhan.mis']] as [number, string, string][]).map(([x, color, name]) => (
        <g key={name}>
          <rect x={x} y={60} width={27} height={15} rx={4} fill={color} />
          <Label x={x + 33} y={72} size={13} fill="#333333">{name}</Label>
        </g>
      ))}
      <Pill x={850} y={68}>All</Pill>
      <Pill x={886} y={68} w={28}>Inv</Pill>
      {['0', '5', '10', '15', '20', '25', '30'].map((tick, i) => (
        <g key={tick}>
          {i < 6 && i !== 4 && <path d={`M90 ${532 - i * 72.3}H900`} stroke="#e0e6f1" strokeWidth={2.5} />}
          <Label x={82} y={536 - i * 72.3} size={12} anchor="end" fill="#6e7079">{tick}</Label>
        </g>
      ))}
      {bars.map(([x, top, color]) => (
        <rect key={x} x={x} y={top} width={37} height={532 - top} fill={color} />
      ))}
      <path d="M90 532H900" stroke="#888888" strokeWidth={3} />
      {['9', '10', '11', '12', '13'].map((day, i) => (
        <Label key={day} x={168 + i * 163} y={547} size={12} anchor="middle" fill="#6e7079">{day}</Label>
      ))}
    </Thumbnail>
  );
}

/* ---------- icons ---------- */

function Logo() {
  return (
    <svg viewBox="0 0 42 22" className="h-[22px] w-[42px]" fill="none" strokeWidth={6} aria-hidden="true">
      <path d="M15.5 5.2C10 .8 3.200 4.600 3.200 10.800C3.200 17.200 10.500 20.500 15.500 16.500" stroke="#484848" />
      <path d="M26.500 5.200C31.500 .8 38.600 4.600 38.600 10.800C38.600 17.200 31.500 20.800 26.500 16.500" stroke="#484848" />
      <path d="M14.300 4.200C17 6 18.500 8 21 10.800C23.500 13.600 25 15.600 27.300 17.200" stroke="#20a7c9" />
      <path d="M14.300 17.300C17 15.700 18.500 13.600 21 10.800C23.500 8 25 6 27.500 4.400" stroke="#484848" />
    </svg>
  );
}

function GaugeIcon() {
  return (
    <svg viewBox="0 0 22 20" className="mt-0.5 h-5 w-[22px] shrink-0" fill="none" aria-hidden="true">
      <path d="M3.700 17A9.200 9.200 0 1 1 18.300 17" stroke="#1f1f1f" strokeWidth={2} strokeLinecap="round" />
      <path d="M15.800 6.800L12.200 13.300A1.900 1.900 0 1 1 9.500 10.900Z" fill="#1f1f1f" />
    </svg>
  );
}

function StarIcon() {
  return (
    <svg viewBox="0 0 16 16" className="size-4" fill="none" stroke="#b2b2b2" strokeWidth={1.9} aria-hidden="true">
      <path d="M8 1.800L9.800 5.800L14.300 6.300L11 9.300L11.900 13.700L8 11.500L4.100 13.700L5 9.300L1.700 6.300L6.200 5.800Z" />
    </svg>
  );
}

function DotsIcon() {
  return (
    <svg viewBox="0 0 6 18" className="h-[18px] w-[6px]" fill="#666666" aria-hidden="true">
      <circle cx={3} cy={2} r={2} />
      <circle cx={3} cy={9} r={2} />
      <circle cx={3} cy={16} r={2} />
    </svg>
  );
}

function CertifiedIcon() {
  return (
    <svg viewBox="0 0 16 16" className="size-4 shrink-0" aria-hidden="true">
      <path
        d="M8 .8L9.700 2.100L11.800 1.700L12.600 3.600L14.600 4.500L14.200 6.500L15.300 8.200L14 9.800L14.200 11.900L12.300 12.600L11.400 14.500L9.400 14L7.700 15.200L6.200 13.800L4.100 14L3.400 12L1.500 11.100L2 9.100L.9 7.400L2.300 5.900L2.100 3.800L4.100 3.200L5 1.400L7 2Z"
        fill="#20a7c9"
        stroke="#20a7c9"
        strokeLinejoin="round"
      />
      <path d="M5 8.200L7.200 10.300L11 6" stroke="#ffffff" strokeWidth={1.7} fill="none" />
    </svg>
  );
}

/* ---------- page pieces ---------- */

interface SectionProps {
  title: string;
  tabs?: string[];
  initialTab?: string;
  defaultOpen?: boolean;
  children?: ReactNode;
}

function Section({ title, tabs = [], initialTab, defaultOpen = true, children }: SectionProps) {
  const [open, setOpen] = useState(defaultOpen);
  const [active, setActive] = useState(initialTab);

  return (
    <section>
      <h2>
        <button type="button" aria-expanded={open} onClick={() => setOpen(!open)} className="flex h-6 items-center pl-4 text-base">
          <svg viewBox="0 0 12 12" className={`mr-3 size-3 ${open ? '' : '-rotate-90'}`} fill="none" stroke="#333333" strokeWidth={1.3} aria-hidden="true">
            <path d="M1.500 1.500L6 8L10.500 1.500" />
          </svg>
          {title}
        </button>
      </h2>
      {open && (
        <div className="pl-10">
          <div role="tablist" className="mt-7 flex gap-2.5 border-b-2 border-[#e0e0e0] pb-[15px] pl-[13px]">
            {tabs.map(tab => (
              <button
                key={tab}
                type="button"
                role="tab"
                aria-selected={tab === active}
                onClick={() => setActive(tab)}
                className={`h-[31px] rounded px-4 text-xs text-[#454e7c] ${tab === active ? 'bg-[#ebecf1]' : ''}`}
              >
                {tab}
              </button>
            ))}
          </div>
          {children}
        </div>
      )}
    </section>
  );
}

function RecentCard({ title, time }: { title: string; time: string }) {
  return (
    <a href="#" className="flex h-[76px] w-[300px] shrink-0 gap-[17px] rounded border border-[#e0e0e0] bg-white pt-[11px] pl-[9px]">
      <GaugeIcon />
      <div className="whitespace-nowrap">
        <div className="text-base font-medium">{title}</div>
        <div className="mt-1.5 text-sm leading-5 text-[#999999]">{time}</div>
      </div>
    </a>
  );
}

interface ListCardProps {
  title: string;
  time: string;
  thumb: ReactNode;
  published?: boolean;
  certified?: boolean;
}

function ListCard({ title, time, thumb, published = false, certified = false }: ListCardProps) {
  return (
    <article className="w-[300px] overflow-hidden rounded border border-[#e0e0e0] bg-white">
      <a href="#" className="block h-[167px] border-b border-[#e0e0e0] bg-[#f7f7f7]">{thumb}</a>
      <div className="px-2 pt-3 pb-[11px]">
        <div className="flex h-6 items-center">
          {certified && <CertifiedIcon />}
          <a href="#" className={`grow whitespace-nowrap text-base font-medium ${certified ? 'pl-1' : ''}`}>{title}</a>
          <button type="button" aria-label="Add to favorites" className="mt-[3px] mr-[13px]"><StarIcon /></button>
          <button type="button" aria-label="More options" className="mt-[3px] mr-[9px]"><DotsIcon /></button>
        </div>
        <div className={`flex h-6 items-center justify-between ${published ? 'mt-[5px]' : 'mt-1'}`}>
          <span className="text-sm text-[#999999]">{time}</span>
          {published && <span className="rounded-full bg-[#f0f0f0] px-[11px] py-[3px] text-xs text-[#323232]">published</span>}
        </div>
      </div>
    </article>
  );
}

const recents = [
  { title: 'CatSubcatSKUKp', time: 'Viewed 2 hours ago' },
  { title: 'Redshift (ETL) - Admin Monitor', time: 'Viewed 2 hours ago' },
  { title: 'Airflow Resource Monitoring ...', time: 'Viewed 2 hours ago' },
  { title: 'Promo Analysis', time: 'Viewed 16 hours ago' },
  { title: 'Api Gateway', time: 'Viewed 17 hours ago' },
  { title: 'Franchise Api Gateway', time: 'Viewed 17 hours ago' },
];

const dashboards: ListCardProps[] = [
  { title: 'Redshift Clusters Monitori...', time: 'Modified 50 minutes ago', thumb: <PlaceholderThumb /> },
  { title: 'Api Gateway', time: 'Modified 50 minutes ago', thumb: <ApiGatewayThumb /> },
  { title: 'Redshift (ETL) - Admin ...', time: 'Modified 2 hours ago', thumb: <RedshiftThumb />, certified: true },
  { title: 'Airflow Resource Monitori...', time: 'Modified 2 hours ago', thumb: <AirflowThumb /> },
  { title: 'Live Order Services', time: 'Modified 17 hours ago', thumb: <LiveOrderThumb /> },
];

const charts: ListCardProps[] = [
  { title: 'Scheduled Cron Jobs Dur...', time: 'Modified 21 hours ago', thumb: <CronThumb /> },
  { title: 'Top 10 Users That Consu...', time: 'Modified 21 hours ago', thumb: <PieThumb /> },
  { title: 'Admin Panel Reports Failu...', time: 'Modified 21 hours ago', thumb: <FailureThumb /> },
  { title: 'Admin Panel Reports Max ...', time: 'Modified 21 hours ago', thumb: <MaxThumb /> },
  { title: 'Aborted Query Counts Pe...', time: 'Modified 21 hours ago', thumb: <AbortedThumb /> },
];

export default function App() {
  return (
    <div className="min-h-screen overflow-hidden bg-[#f7f7f7] font-['Inter',sans-serif] text-[#262626]">
      <div className="h-1.5 bg-[#2a2a2a]" />
      <header className="flex h-[55px] items-start border-b-2 border-[#f5f5f5] bg-white pt-px pl-px text-sm">
        <a href="#" className="flex h-[48px] w-[146px] items-center rounded border-2 border-[#1360c8] pb-0.5 pl-[13px]">
          <Logo />
          <span className="pl-1 font-['Roboto',sans-serif] text-[19px] font-bold text-[#484848]">Superset</span>
        </a>
        <nav className="flex h-[53px] items-center pl-[17px]">
          <a href="#" className="mr-8">Dashboards</a>
          <a href="#" className="mr-8">Charts</a>
          <a href="#" className="mr-7">Datasets</a>
          <button type="button" className="flex items-center gap-1.5">
            SQL
            <svg viewBox="0 0 6 4" className="h-1 w-1.5" fill="#444444" aria-hidden="true"><path d="M0 0H6L3 4Z" /></svg>
          </button>
        </nav>
      </header>
      <div className="flex h-[60px] items-center bg-white pl-3">
        <h1 className="text-lg font-semibold text-[#323232]">Home</h1>
      </div>

      <main className="pt-7">
        <Section title="Recents" tabs={['Viewed', 'Edited', 'Created']} initialTab="Viewed">
          <div className="flex gap-4 pt-[25px] pb-[33px] pl-3">
            {recents.map(item => <RecentCard key={item.title} {...item} />)}
          </div>
        </Section>
        <Section title="Dashboards" tabs={['Favorite', 'Mine', 'All']} initialTab="All">
          <div className="flex flex-wrap gap-4 pt-[27px] pb-[35px] pl-3">
            {dashboards.map(item => <ListCard key={item.title} {...item} published />)}
          </div>
        </Section>
        <Section title="Charts" tabs={['Favorite', 'Mine', 'All']} initialTab="All">
          <div className="flex flex-wrap gap-4 pt-[27px] pb-[35px] pl-3">
            {charts.map(item => <ListCard key={item.title} {...item} />)}
          </div>
        </Section>
        <Section title="Saved queries" defaultOpen={false} />
      </main>

      <div className="fixed bottom-0 left-0 rounded-tr bg-[#1a1a1a] py-0.5 pr-[7px] pl-[5px] text-xs leading-[17px] text-white shadow-lg">
        https://superset.data.getirapi.com/superset/welcome/
      </div>
    </div>
  );
}
